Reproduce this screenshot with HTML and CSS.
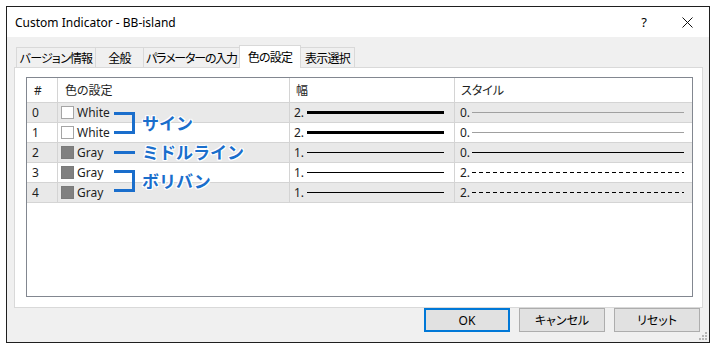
FILE: index.html
```html
<!DOCTYPE html>
<html lang="ja">
<head>
    <meta charset="UTF-8">
    <title>Custom Indicator - BB-island</title>
    <link rel="stylesheet" href="styles.css">
</head>
<body>
    <div class="window">
        <div class="titlebar">
            <span class="title">Custom Indicator - BB-island</span>
            <span class="help">?</span>
            <svg class="close" width="11" height="11" viewBox="0 0 11 11"><path d="M0.5 0.5L10.5 10.5M10.5 0.5L0.5 10.5" stroke="#111" stroke-width="1"/></svg>
        </div>

        <div class="content">
            <div class="tabs">
                <div class="tab tab-version">バージョン情報</div>
                <div class="tab tab-general">全般</div>
                <div class="tab tab-params">パラメーターの入力</div>
                <div class="tab tab-colors active">色の設定</div>
                <div class="tab tab-display">表示選択</div>
            </div>

            <div class="panel">
                <div class="grid">
                    <div class="row head">
                        <div class="cell num">#</div>
                        <div class="cell color">色の設定</div>
                        <div class="cell width">幅</div>
                        <div class="cell style">スタイル</div>
                    </div>
                    <div class="row odd">
                        <div class="cell num">0</div>
                        <div class="cell color"><span class="swatch"></span>White</div>
                        <div class="cell width">2.<span class="line thick"></span></div>
                        <div class="cell style">0.<span class="line long light"></span></div>
                    </div>
                    <div class="row">
                        <div class="cell num">1</div>
                        <div class="cell color"><span class="swatch"></span>White</div>
                        <div class="cell width">2.<span class="line thick"></span></div>
                        <div class="cell style">0.<span class="line long light"></span></div>
                    </div>
                    <div class="row odd">
                        <div class="cell num">2</div>
                        <div class="cell color"><span class="swatch gray"></span>Gray</div>
                        <div class="cell width">1.<span class="line"></span></div>
                        <div class="cell style">0.<span class="line long"></span></div>
                    </div>
                    <div class="row">
                        <div class="cell num">3</div>
                        <div class="cell color"><span class="swatch gray"></span>Gray</div>
                        <div class="cell width">1.<span class="line"></span></div>
                        <div class="cell style">2.<span class="line long dashed"></span></div>
                    </div>
                    <div class="row odd">
                        <div class="cell num">4</div>
                        <div class="cell color"><span class="swatch gray"></span>Gray</div>
                        <div class="cell width">1.<span class="line"></span></div>
                        <div class="cell style">2.<span class="line long dashed"></span></div>
                    </div>

                    <!-- annotations drawn over the grid -->
                    <div class="note note-sign"><span class="bracket"></span><span class="label">サイン</span></div>
                    <div class="note note-mid"><span class="dash"></span><span class="label">ミドルライン</span></div>
                    <div class="note note-band"><span class="bracket"></span><span class="label">ボリバン</span></div>
                </div>
            </div>

            <div class="actions">
                <button class="btn primary">OK</button>
                <button class="btn">キャンセル</button>
                <button class="btn">リセット</button>
            </div>
        </div>

        <svg class="grip" width="8" height="8" viewBox="0 0 8 8">
            <rect x="6" y="0" width="2" height="2" fill="#b5b5b5"/>
            <rect x="3" y="3" width="2" height="2" fill="#b5b5b5"/>
            <rect x="6" y="3" width="2" height="2" fill="#b5b5b5"/>
            <rect x="0" y="6" width="2" height="2" fill="#b5b5b5"/>
            <rect x="3" y="6" width="2" height="2" fill="#b5b5b5"/>
            <rect x="6" y="6" width="2" height="2" fill="#b5b5b5"/>
        </svg>
    </div>
</body>
</html>
```

FILE: styles.css
```css
* {
    box-sizing: border-box;
}
body {
    margin: 0;
    background: #fff;
    font-family: "Noto Sans", "Noto Sans CJK JP", sans-serif;
    font-size: 12px;
    font-feature-settings: "palt";
    color: #1e1e1e;
}
.window {
    position: relative;
    margin: 6px 0 0 6px;
    width: 704px;
    height: 337px;
    border: 1px solid #1f1f1f;
    background: #f0f0f0;
}
.titlebar {
    height: 30px;
    background: #fff;
    display: flex;
    align-items: center;
    padding: 0 16px 0 8px;
}
.title {
    flex: 1;
    font-size: 12px;
    color: #000;
}
.help {
    font-size: 13px;
    margin-right: 35px;
    color: #000;
}
.content {
    padding: 8px 6px 0 7px;
}
.tabs {
    display: flex;
    align-items: flex-end;
    height: 22px;
    padding-left: 2px;
    position: relative;
    z-index: 1;
}
.tab {
    height: 20px;
    margin-left: -1px;
    border: 1px solid #d9d9d9;
    border-bottom: none;
    background: #f0f0f0;
    display: flex;
    align-items: center;
    justify-content: center;
    letter-spacing: -0.8px;
    white-space: nowrap;
    color: #000;
}
.tab:first-child {
    margin-left: 0;
}
.tab-version {
    width: 80px;
}
.tab-general {
    width: 49px;
}
.tab-params {
    width: 97px;
    letter-spacing: -1.2px;
}
.tab-colors {
    width: 62px;
}
.tab-display {
    width: 55px;
}
.tab.active {
    height: 23px;
    margin-bottom: -1px;
    background: #fff;
    align-items: flex-start;
    padding-top: 2px;
}
.panel {
    height: 241px;
    background: #fff;
    border: 1px solid #d9d9d9;
    padding: 9px 9px 10px 11px;
}
.grid {
    position: relative;
    height: 100%;
    border: 1px solid #828790;
    background: #fff;
}
.row {
    display: grid;
    grid-template-columns: 31px 232px 165px 1fr;
    height: 20px;
    border-bottom: 1px solid #d4d4d4;
}
.row.odd {
    background: #e9e9e9;
}
.row.head {
    height: 25px;
    background: #fff;
}
.cell {
    display: flex;
    align-items: center;
    border-right: 1px solid #d4d4d4;
    white-space: nowrap;
}
.cell:last-child {
    border-right: none;
}
.num {
    padding-left: 5px;
}
.head .num {
    padding-left: 7px;
}
.color {
    padding-left: 3px;
}
.head .color {
    padding-left: 7px;
}
.width {
    padding-left: 4px;
}
.head .width {
    padding-left: 6px;
}
.style {
    padding-left: 5px;
}
.head .style {
    padding-left: 6px;
}
.swatch {
    width: 13px;
    height: 13px;
    border: 1px solid #a5a5a5;
    background: #fff;
    margin-right: 3px;
}
.swatch.gray {
    background: #808080;
    border-color: #7a7a7a;
}
.line {
    width: 137px;
    margin-left: 3px;
    border-top: 1px solid #000;
}
.line.thick {
    border-top-width: 3px;
}
.line.long {
    width: 212px;
    margin-left: 2px;
}
.line.light {
    border-top-color: #a0a0a0;
}
.line.dashed {
    border-top: none;
    height: 1px;
    background: repeating-linear-gradient(90deg, #000 0 4px, transparent 4px 7px);
}
.note {
    position: absolute;
    left: 87px;
    display: flex;
    align-items: center;
    gap: 7px;
}
.note-sign {
    top: 34px;
}
.note-mid {
    top: 63px;
}
.note-band {
    top: 92px;
}
.bracket {
    width: 21px;
    height: 22px;
    border: 3px solid #1a6ecc;
    border-left: none;
}
.dash {
    width: 21px;
    height: 3px;
    margin: 9px 0;
    background: #1a6ecc;
}
.label {
    font-family: "Noto Sans CJK JP", sans-serif;
    font-size: 17px;
    font-weight: bold;
    font-feature-settings: normal;
    line-height: 22px;
    color: #1a6ecc;
    text-shadow: 1px 0 #fff, -1px 0 #fff, 0 1px #fff, 0 -1px #fff, 1px 1px #fff, -1px -1px #fff, 1px -1px #fff, -1px 1px #fff;
}
.actions {
    display: flex;
    justify-content: flex-end;
    gap: 9px;
    padding-right: 3px;
}
.btn {
    width: 86px;
    height: 24px;
    border: 1px solid #adadad;
    background: #e1e1e1;
    font-family: inherit;
    font-size: 12px;
    font-feature-settings: "palt";
    color: #000;
    padding: 0;
}
.btn.primary {
    border: 2px solid #0078d7;
}
.grip {
    position: absolute;
    right: 2px;
    bottom: 2px;
}
```
